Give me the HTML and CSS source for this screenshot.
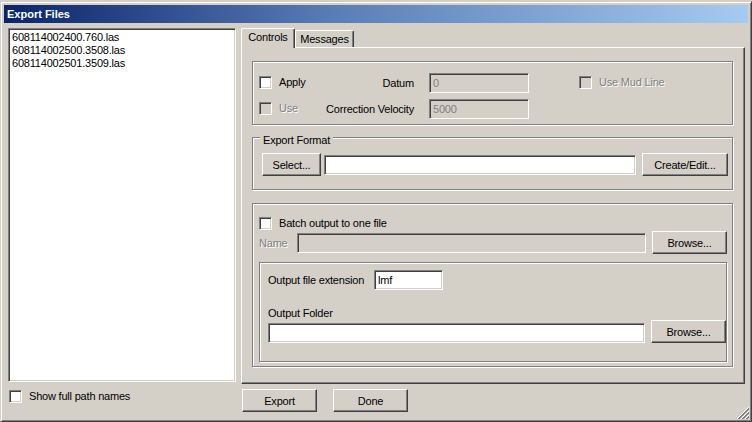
FILE: index.html
```html
<!DOCTYPE html>
<html lang="en">
<head>
	<meta charset="UTF-8">
	<title>Export Files</title>
	<link rel="stylesheet" href="styles.css">
</head>
<body>
	<div class="win">
		<div class="titlebar">Export Files</div>
		<div class="client">
			<div class="left">
				<ul class="listbox">
					<li>608114002400.760.las</li>
					<li>608114002500.3508.las</li>
					<li>608114002501.3509.las</li>
				</ul>
				<label class="check full_path"><span class="box"></span>Show full path names</label>
			</div>
			<div class="right">
				<div class="tabs">
					<div class="tab active">Controls</div>
					<div class="tab msgs">Messages</div>
				</div>
				<div class="panel">
					<div class="group datum_group">
						<label class="check"><span class="box"></span>Apply</label>
						<span class="lbl">Datum</span>
						<div class="field off">0</div>
						<label class="check off mud"><span class="box"></span>Use Mud Line</label>
						<label class="check off"><span class="box"></span>Use</label>
						<span class="lbl">Correction Velocity</span>
						<div class="field off">5000</div>
					</div>

					<div class="group format_group">
						<span class="legend">Export Format</span>
						<button type="button" class="btn select_btn">Select...</button>
						<div class="field grow"></div>
						<button type="button" class="btn create_btn">Create/Edit...</button>
					</div>

					<div class="group output_group">
						<label class="check batch"><span class="box"></span>Batch output to one file</label>
						<div class="row name_row">
							<span class="name_lbl off_text">Name</span>
							<div class="field off grow"></div>
							<button type="button" class="btn browse_btn">Browse...</button>
						</div>
						<div class="group inner_group">
							<div class="row ext_row">
								<span class="ext_lbl">Output file extension</span>
								<div class="field ext">lmf</div>
							</div>
							<div class="folder_lbl">Output Folder</div>
							<div class="row folder_row">
								<div class="field grow"></div>
								<button type="button" class="btn browse_btn">Browse...</button>
							</div>
						</div>
					</div>
				</div>
				<div class="buttons">
					<button type="button" class="btn">Export</button>
					<button type="button" class="btn">Done</button>
				</div>
			</div>
		</div>
		<svg class="grip" width="12" height="12" viewBox="0 0 12 12" shape-rendering="crispEdges">
			<path d="M12 0L0 12M12 4L4 12M12 8L8 12" stroke="#fff" fill="none"/>
			<path d="M12 1L1 12M12 2L2 12M12 5L5 12M12 6L6 12M12 9L9 12M12 10L10 12" stroke="#808080" fill="none"/>
		</svg>
	</div>
</body>
</html>
```

FILE: styles.css
```css
*{
	margin: 0;
	padding: 0;
	box-sizing: border-box;
}
body{
	background-color: #d4d0c8;
	padding-top: 1px;
	font-family: "Liberation Sans", Arial, sans-serif;
	font-size: 11px;
	letter-spacing: -0.2px;
	color: #000;
}
.win{
	position: relative;
	width: 752px;
	height: 421px;
	border: 1px solid;
	border-color: #d4d0c8 #404040 #404040 #d4d0c8;
	box-shadow: inset 1px 1px #fff, inset -1px -1px #808080;
	padding: 3px;
	background-color: #d4d0c8;
}
.titlebar{
	height: 18px;
	line-height: 18px;
	padding-left: 3px;
	font-weight: bold;
	letter-spacing: 0;
	color: #fff;
	background: linear-gradient(to right, #0a246a, #5c7eb6 45%, #a6caf0);
}
.client{
	display: flex;
	padding: 5px 0 0 4px;
}

/* left side */
.left{
	width: 228px;
}
.listbox{
	list-style: none;
	height: 354px;
	background-color: #fff;
	border: 1px solid;
	border-color: #808080 #fff #fff #808080;
	box-shadow: inset 1px 1px #404040, inset -1px -1px #d4d0c8;
	padding: 2px 3px;
}
.listbox li{
	line-height: 13px;
	white-space: nowrap;
}
.full_path{
	margin: 8px 0 0 1px;
}

/* checkboxes */
.check{
	display: flex;
	align-items: center;
	gap: 7px;
	line-height: 13px;
	white-space: nowrap;
}
.box{
	display: inline-block;
	width: 13px;
	height: 13px;
	background-color: #fff;
	border: 1px solid;
	border-color: #808080 #fff #fff #808080;
	box-shadow: inset 1px 1px #404040, inset -1px -1px #d4d0c8;
}
.check.off, .off_text{
	color: #808080;
	text-shadow: 1px 1px #fff;
}
.check.off .box{
	background-color: #d4d0c8;
}

/* tabs */
.right{
	width: 504px;
	margin-left: 5px;
}
.tabs{
	display: flex;
	align-items: flex-end;
	height: 19px;
}
.tab{
	height: 17px;
	padding-top: 2px;
	line-height: 13px;
	text-align: center;
	border: 1px solid;
	border-bottom: none;
	border-color: #fff #404040 #fff #fff;
	border-radius: 2px 2px 0 0;
	box-shadow: inset -1px 0 #808080;
	background-color: #d4d0c8;
}
.tab.active{
	position: relative;
	z-index: 1;
	width: 54px;
	height: 20px;
	margin-bottom: -1px;
}
.tab.msgs{
	width: 59px;
}
.panel{
	width: 504px;
	height: 337px;
	border: 1px solid;
	border-color: #fff #404040 #404040 #fff;
	box-shadow: inset -1px -1px #808080;
	padding: 13px 11px 0 10px;
}

/* group boxes */
.group{
	position: relative;
	border: 1px solid #808080;
	box-shadow: inset 1px 1px #fff, 1px 1px #fff;
}
.legend{
	position: absolute;
	top: -4px;
	left: 7px;
	padding: 0 3px;
	line-height: 13px;
	background-color: #d4d0c8;
}
.datum_group{
	height: 64px;
	display: grid;
	grid-template-columns: 60px 110px 100px auto;
	grid-template-rows: 21px 21px;
	row-gap: 5px;
	align-items: center;
	padding: 10px 0 0 6px;
}
.lbl{
	text-align: right;
	padding-right: 15px;
	white-space: nowrap;
}
.mud{
	padding-left: 50px;
}
.format_group{
	height: 53px;
	margin-top: 12px;
	display: flex;
	align-items: flex-start;
	padding: 15px 4px 0 9px;
}
.format_group .field{
	margin: 2px 6px 0 3px;
}
.select_btn{
	width: 59px;
}
.create_btn{
	width: 86px;
}
.output_group{
	height: 164px;
	margin-top: 13px;
	padding: 13px 5px 0 6px;
}
.batch{
	height: 13px;
}
.row{
	display: flex;
	align-items: center;
}
.name_row{
	margin-top: 1px;
}
.name_lbl{
	width: 38px;
}
.name_row .field, .folder_row .field{
	margin-right: 6px;
}
.browse_btn{
	width: 75px;
}
.inner_group{
	height: 100px;
	margin-top: 8px;
	padding: 7px 0 0 8px;
}
.ext_lbl{
	width: 106px;
}
.ext{
	width: 69px;
}
.folder_lbl{
	margin-top: 17px;
	line-height: 13px;
}
.folder_row{
	align-items: flex-end;
}

/* controls */
.field{
	height: 20px;
	line-height: 18px;
	padding: 0 3px;
	background-color: #fff;
	border: 1px solid;
	border-color: #808080 #fff #fff #808080;
	box-shadow: inset 1px 1px #404040, inset -1px -1px #d4d0c8;
	white-space: nowrap;
}
.field.off{
	background-color: #d4d0c8;
	color: #808080;
}
.grow{
	flex: 1;
}
.btn{
	height: 23px;
	font-family: "Liberation Sans", Arial, sans-serif;
	font-size: 11px;
	letter-spacing: -0.2px;
	color: #000;
	background-color: #d4d0c8;
	border: 1px solid;
	border-color: #fff #404040 #404040 #fff;
	box-shadow: inset -1px -1px #808080;
}
.buttons{
	display: flex;
	gap: 16px;
	margin: 5px 0 0 1px;
}
.buttons .btn{
	width: 75px;
}
.grip{
	position: absolute;
	right: 2px;
	bottom: 2px;
}
```
